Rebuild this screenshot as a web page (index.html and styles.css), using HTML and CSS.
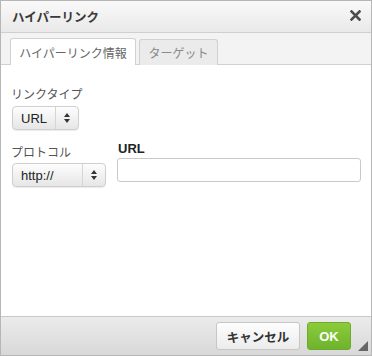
FILE: index.html
```html
<!DOCTYPE html>
<html lang="ja">
<head>
<meta charset="utf-8">
<title>ハイパーリンク</title>
<link rel="stylesheet" href="styles.css">
</head>
<body>
<div class="dialog">
  <div class="titlebar">
    <span class="title">ハイパーリンク</span>
    <svg class="close" width="11" height="11" viewBox="0 0 11 11"><path d="M1.5 1.5L9.5 9.5M9.5 1.5L1.5 9.5" stroke="#4d4d4d" stroke-width="2.6" stroke-linecap="square"/></svg>
  </div>
  <div class="tabs">
    <div class="tab active">ハイパーリンク情報</div>
    <div class="tab">ターゲット</div>
  </div>
  <div class="body">
    <div class="field">
      <div class="label">リンクタイプ</div>
      <div class="select sel-type"><span class="val">URL</span><span class="arrows"><svg width="6" height="10" viewBox="0 0 6 10"><path d="M3 0L6 4H0Z M3 10L0 6H6Z" fill="#333"/></svg></span></div>
    </div>
    <div class="row">
      <div class="field proto-field">
        <div class="label">プロトコル</div>
        <div class="select sel-proto"><span class="val">http://</span><span class="arrows"><svg width="6" height="10" viewBox="0 0 6 10"><path d="M3 0L6 4H0Z M3 10L0 6H6Z" fill="#333"/></svg></span></div>
      </div>
      <div class="field url-field">
        <div class="label bold">URL</div>
        <div class="input"></div>
      </div>
    </div>
  </div>
  <div class="footer">
    <div class="btn cancel">キャンセル</div>
    <div class="btn ok">OK</div>
    <span class="grip"></span>
  </div>
</div>
</body>
</html>
```

FILE: styles.css
```css
html, body {
  margin: 0;
  padding: 0;
  background: #fff;
}
body {
  font-family: "Liberation Sans", "Noto Sans CJK JP", sans-serif;
  color: #333;
}
.dialog {
  width: 372px;
  height: 356px;
  box-sizing: border-box;
  border: 1px solid #b6b6b6;
  display: flex;
  flex-direction: column;
  background: #fff;
}
.titlebar {
  height: 32px;
  flex: none;
  box-sizing: border-box;
  border-bottom: 1px solid #cfcfcf;
  background: linear-gradient(#f9f9f9, #e9e9e9);
  display: flex;
  align-items: center;
  justify-content: space-between;
  padding: 0 10px 0 11px;
}
.title {
  font-family: "Noto Sans CJK JP", sans-serif;
  font-weight: bold;
  font-size: 12.5px;
  color: #3a3a3a;
}
.close {
  display: block;
  margin-top: -2px;
}
.tabs {
  height: 32px;
  flex: none;
  box-sizing: border-box;
  background: #f3f3f3;
  border-bottom: 1px solid #d1d1d1;
  display: flex;
  align-items: flex-end;
  padding-left: 9px;
  gap: 3px;
}
.tab {
  height: 26px;
  box-sizing: border-box;
  border: 1px solid #d1d1d1;
  border-bottom: none;
  border-radius: 3px 3px 0 0;
  background: #ebebeb;
  font-family: "Noto Sans CJK JP", sans-serif;
  font-size: 12px;
  color: #8a8a8a;
  display: flex;
  align-items: center;
  justify-content: center;
  width: 79px;
  margin-bottom: -1px;
}
.tab.active {
  background: #fff;
  color: #666;
  height: 27px;
  width: 126px;
}
.body {
  flex: 1;
  padding: 20px 10px 0 10px;
}
.label {
  font-family: "Noto Sans CJK JP", sans-serif;
  font-size: 12px;
  color: #555;
  line-height: 17px;
  margin-bottom: 4px;
}
.label.bold {
  font-family: "Liberation Sans", sans-serif;
  font-weight: bold;
  color: #222;
  font-size: 13px;
  margin-left: 1px;
  margin-bottom: 1px;
}
.select {
  height: 24px;
  box-sizing: border-box;
  border: 1px solid #cfcfcf;
  border-radius: 4px;
  background: linear-gradient(#fdfdfd, #e6e6e6);
  display: flex;
  align-items: center;
  font-size: 13px;
  color: #222;
  box-shadow: 0 1px 1px rgba(0,0,0,0.08);
}
.select .val {
  flex: 1;
  padding-left: 8px;
}
.select .arrows {
  width: 22px;
  height: 100%;
  border-left: 1px solid #d5d5d5;
  display: flex;
  align-items: center;
  justify-content: center;
}
.sel-type {
  width: 67px;
  margin-left: 1px;
}
.sel-proto {
  width: 94px;
  margin-left: 1px;
}
.row {
  display: flex;
  gap: 11px;
  margin-top: 10px;
}
.proto-field {
  padding-top: 3px;
}
.proto-field .label {
  margin-bottom: 3px;
}
.url-field {
  flex: 1;
}
.input {
  height: 24px;
  box-sizing: border-box;
  border: 1px solid #c9c9c9;
  border-radius: 3px;
  background: #fff;
}
.footer {
  height: 39px;
  flex: none;
  box-sizing: border-box;
  border-top: 1px solid #c9c9c9;
  background: linear-gradient(#ebebeb, #d8d8d8);
  display: flex;
  align-items: center;
  justify-content: flex-end;
  padding-right: 20px;
  gap: 7px;
  position: relative;
}
.btn {
  height: 28px;
  box-sizing: border-box;
  border-radius: 3px;
  display: flex;
  align-items: center;
  justify-content: center;
  font-size: 13px;
  font-weight: bold;
}
.cancel {
  width: 84px;
  border: 1px solid #c6c6c6;
  background: linear-gradient(#fdfdfd, #ececec);
  color: #333;
  font-family: "Noto Sans CJK JP", sans-serif;
  font-size: 12.5px;
}
.ok {
  width: 44px;
  border: 1px solid #6cab2c;
  background: linear-gradient(#8ccc3a, #6eb32d);
  color: #fff;
}
.grip {
  position: absolute;
  right: 3px;
  bottom: 4px;
  width: 0;
  height: 0;
  border-left: 10px solid transparent;
  border-bottom: 10px solid #666;
}
```
